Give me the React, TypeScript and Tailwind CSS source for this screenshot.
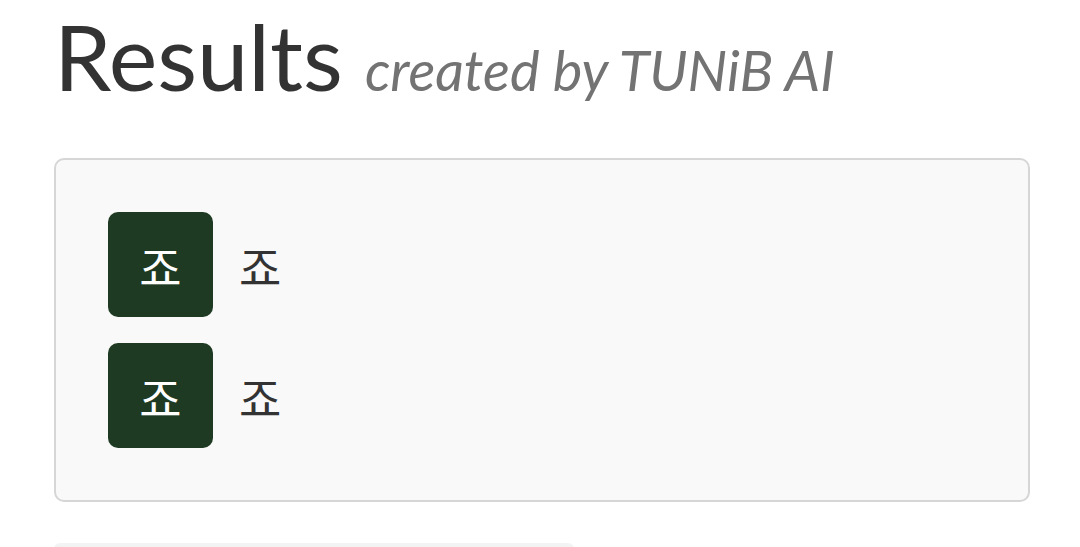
export default function App() {
  const rows = ['죠', '죠'];

  return (
    <div className="w-[1080px] h-[547px] overflow-hidden bg-white font-['Lato','Noto_Sans_CJK_KR',sans-serif]">
      {/* Title */}
      <div className="pl-[54px] pt-[10px] flex items-baseline h-[116px]">
        <h1 className="text-[92px] leading-none text-[#333333] font-normal">Results</h1>
        <span className="ml-[22px] text-[56px] italic text-[#737373] leading-none">created by TUNiB AI</span>
      </div>

      {/* Card */}
      <div className="mx-[54px] mt-[42px] w-[976px] h-[344px] rounded-[10px] border-2 border-[#d6d6d6] bg-[#f9f9f9] pl-[52px] pt-[52px] flex flex-col gap-[26px]">
        {rows.map((r, i) => (
          <div key={i} className="flex items-center">
            <div className="w-[105px] h-[105px] rounded-[10px] bg-[#1e3a22] flex items-center justify-center">
              <span className="text-white text-[46px] leading-none font-['Noto_Sans_CJK_KR',sans-serif]">{r}</span>
            </div>
            <span className="ml-[26px] text-[46px] leading-none text-[#333333] font-['Noto_Sans_CJK_KR',sans-serif]">{r}</span>
          </div>
        ))}
      </div>

      {/* Next block peeking in */}
      <div className="ml-[54px] mt-[41px] w-[520px] h-[10px] rounded-t-[6px] bg-[#f3f3f3]" />
    </div>
  );
}
